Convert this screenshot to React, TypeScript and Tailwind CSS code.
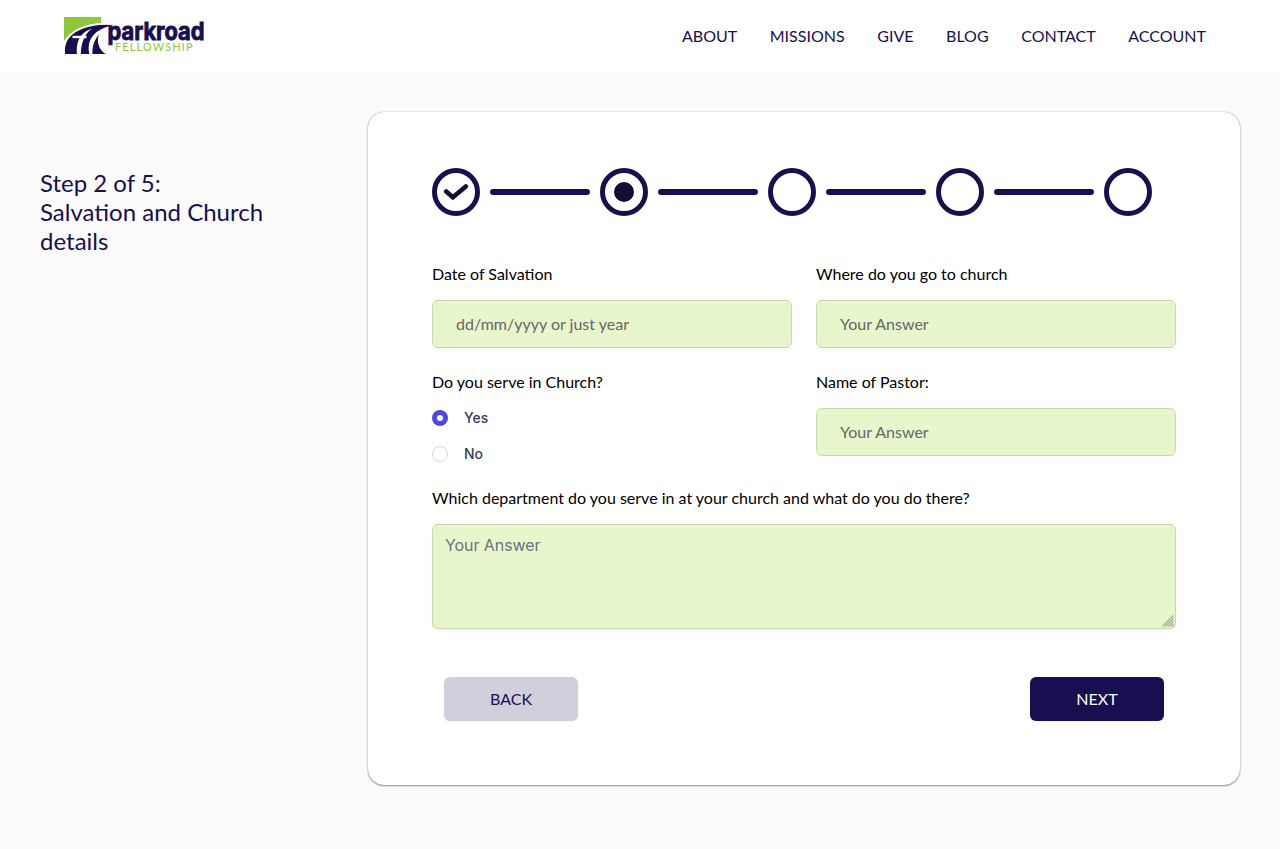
import React from "react";

const NAV = ["ABOUT", "MISSIONS", "GIVE", "BLOG", "CONTACT", "ACCOUNT"];

function Logo() {
  return (
    <svg width="142" height="40" viewBox="0 0 142 40" className="block overflow-visible" role="img" aria-label="Parkroad Fellowship">
      <path d="M0 1H37V7C20 8 7 15 0 25Z" fill="#8fc93a" />
      <path d="M1 38C0 27 5 19 14 14C23 9 35 7 49 9C38 11 33 18 34 26C35 32 38 36 42 38Z" fill="#170f4f" />
      <path d="M0 27C7 15 20 7 47 8" fill="none" stroke="#fff" strokeWidth="1.6" />
      <path d="M13 38.5C12 27 15 17 28 12.5C20 18 17 28 16.8 38.5Z" fill="#fff" />
      <path d="M8.5 21H22.5" fill="none" stroke="#fff" strokeWidth="2.4" />
      <path d="M25.5 38.5C22.5 26 28 14 47 10C34 16 27.5 26 28.5 38.5Z" fill="#fff" />
      <text x="43.5" y="24" textLength="97" lengthAdjust="spacingAndGlyphs" fill="#170f4f" stroke="#170f4f" strokeWidth="0.9" className="font-['Inter',sans-serif] text-[24.5px] font-bold">parkroad</text>
      <text x="51" y="34.7" textLength="77.5" lengthAdjust="spacing" fill="#8fc93a" className="font-['Lato',sans-serif] text-[11px]">FELLOWSHIP</text>
    </svg>
  );
}

function Stepper() {
  return (
    <div className="flex items-center gap-[10px]">
      {[0, 1, 2, 3, 4].map((step) => (
        <React.Fragment key={step}>
          {step > 0 && <div className="h-[6px] w-[100px] rounded-full bg-[#170f4f]" />}
          <div className="flex size-12 items-center justify-center rounded-full border-[5px] border-[#170f4f]">
            {step === 0 && (
              <svg width="26" height="20" viewBox="0 0 26 20" fill="none">
                <path d="M3.2 9.4L9.9 15.3L22.8 4.4" stroke="#100f35" strokeWidth="4.6" strokeLinejoin="miter" strokeLinecap="round" />
              </svg>
            )}
            {step === 1 && <div className="size-5 rounded-full bg-[#100f35]" />}
          </div>
        </React.Fragment>
      ))}
    </div>
  );
}

function Field({ label, placeholder }: { label: string; placeholder: string }) {
  return (
    <label className="block">
      <span className="block leading-6">{label}</span>
      <input
        type="text"
        placeholder={placeholder}
        className="mt-[14px] block h-12 w-full rounded-[6px] border border-[#c9d8af] bg-[#e8f6cc] px-[23px] pb-[2px] placeholder:text-[#666666] outline-none"
      />
    </label>
  );
}

function Radio({ label, checked = false }: { label: string; checked?: boolean }) {
  return (
    <div className="flex h-5 items-center gap-4">
      {checked ? (
        <span className="flex size-4 items-center justify-center rounded-full bg-[#4f46e5]">
          <span className="size-[6px] rounded-full bg-white" />
        </span>
      ) : (
        <span className="size-4 rounded-full border border-[#d1d5db] bg-white" />
      )}
      <span className="font-['Inter',sans-serif] text-sm font-medium text-[#374151]">{label}</span>
    </div>
  );
}

export default function App() {
  return (
    <div className="min-h-[849px] bg-[#fbfbfb] font-['Lato',sans-serif] text-base text-black antialiased">
      <header className="flex h-[72px] items-start justify-between bg-white pl-16 pr-[74px]">
        <div className="pt-4">
          <Logo />
        </div>
        <nav className="flex gap-[32.6px] pt-6 leading-6 text-[#170f4f]">
          {NAV.map((item) => (
            <a key={item} href="#">{item}</a>
          ))}
        </nav>
      </header>
      <main className="flex pt-10 pr-10 pl-10">
        <h1 className="w-[328px] shrink-0 pt-14 pr-20 text-2xl leading-[29px] text-[#170f4f]">
          Step 2 of 5:
          <br />
          Salvation and Church details
        </h1>
        <form className="h-[673px] w-[872px] rounded-[16px] bg-white px-16 pt-14 shadow-[0_1px_2px_rgba(0,0,0,0.4),0_0_1px_rgba(0,0,0,0.55)]">
          <Stepper />
          <div className="mt-[46px] grid grid-cols-2 gap-x-6 gap-y-[22px]">
            <Field label="Date of Salvation" placeholder="dd/mm/yyyy or just year" />
            <Field label="Where do you go to church" placeholder="Your Answer" />
            <div>
              <p className="leading-6">Do you serve in Church?</p>
              <div className="mt-[14px] flex flex-col gap-4">
                <Radio label="Yes" checked />
                <Radio label="No" />
              </div>
            </div>
            <Field label="Name of Pastor:" placeholder="Your Answer" />
          </div>
          <label className="relative mt-[22px] block">
            <span className="block leading-6">Which department do you serve in at your church and what do you do there?</span>
            <textarea
              placeholder="Your Answer"
              className="mt-[14px] block h-[105px] w-full resize-none rounded-[6px] border border-[#c9d8af] bg-[#e8f6cc] px-3 py-2 font-['Inter',sans-serif] leading-6 tracking-[-0.08px] shadow-xs outline-none placeholder:text-[#6b7280]"
            />
            <svg width="12" height="12" viewBox="0 0 12 12" className="absolute right-[2px] bottom-[2px]" aria-hidden="true">
              <path d="M0.5 11.5L11.5 0.5M3.5 11.5L11.5 3.5M6.5 11.5L11.5 6.5M9.5 11.5L11.5 9.5" stroke="#a3a8a0" strokeWidth="1.3" />
            </svg>
          </label>
          <div className="mt-12 flex justify-between px-3">
            <button type="button" className="h-11 w-[134px] rounded-[6px] bg-[#d1cfdc] text-[#170f4f] shadow-xs">BACK</button>
            <button type="button" className="h-11 w-[134px] rounded-[6px] bg-[#170f4f] text-white shadow-xs">NEXT</button>
          </div>
        </form>
      </main>
    </div>
  );
}
